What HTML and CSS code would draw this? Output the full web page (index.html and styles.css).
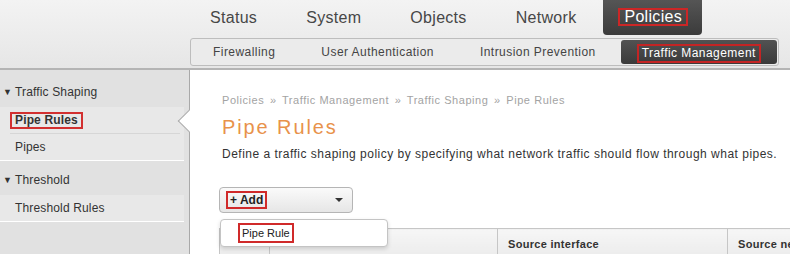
FILE: index.html
```html
<!DOCTYPE html>
<html lang="en">
  <head>
    <meta charset="UTF-8" />
    <title>Pipe Rules</title>
    <link rel="stylesheet" href="styles.css">
  </head>
  <body>

    <!-- Header with main and sub navigation -->
    <header class="header">
      <ul class="main-nav">
        <li>Status</li>
        <li>System</li>
        <li>Objects</li>
        <li>Network</li>
        <li class="active"><span class="mark">Policies</span></li>
      </ul>
      <ul class="sub-nav">
        <li>Firewalling</li>
        <li>User Authentication</li>
        <li>Intrusion Prevention</li>
        <li class="active"><span class="mark">Traffic Management</span></li>
      </ul>
    </header>

    <div class="page">
      <!-- Sidebar -->
      <nav class="sidebar">
        <div class="group"><i>&#9660;</i>Traffic Shaping</div>
        <ul>
          <li class="active"><span class="mark">Pipe Rules</span></li>
          <li>Pipes</li>
        </ul>
        <div class="group"><i>&#9660;</i>Threshold</div>
        <ul>
          <li>Threshold Rules</li>
        </ul>
      </nav>

      <!-- Main Content -->
      <main class="content">
        <div class="crumbs">Policies <i>&raquo;</i> Traffic Management <i>&raquo;</i> Traffic Shaping <i>&raquo;</i> Pipe Rules</div>
        <h1>Pipe Rules</h1>
        <p class="intro">Define a traffic shaping policy by specifying what network traffic should flow through what pipes.</p>

        <div class="add-wrap">
          <button class="add-btn"><span class="mark">+ Add</span><b class="caret"></b></button>
          <div class="add-menu"><span class="mark">Pipe Rule</span></div>
        </div>

        <table class="grid">
          <colgroup>
            <col style="width: 50px">
            <col style="width: 228px">
            <col style="width: 230px">
            <col>
          </colgroup>
          <thead>
            <tr>
              <th></th>
              <th></th>
              <th>Source interface</th>
              <th>Source network</th>
            </tr>
          </thead>
        </table>
      </main>
    </div>

  </body>
</html>
```

FILE: styles.css
```css
* {
  box-sizing: border-box;
}

body {
  margin: 0;
  width: 790px;
  height: 254px;
  overflow: hidden;
  font-family: "Liberation Sans", Arial, sans-serif;
  color: #333;
  background: #fff;
}

ul {
  list-style: none;
  margin: 0;
  padding: 0;
}

/* red annotation boxes */
.mark {
  display: inline-block;
  border: 2px solid #d02a2a;
  padding: 0 3px;
}

/* ---------- header ---------- */

.header {
  height: 70px;
  background: linear-gradient(#f3f3f3, #e6e6e6);
  border-bottom: 2px solid #b4b4b4;
  padding-left: 188px;
}

.main-nav {
  display: flex;
  gap: 5px;
  height: 35px;
}

.main-nav li {
  padding: 0 22px;
  font-size: 16px;
  line-height: 36px;
  letter-spacing: 0.3px;
  color: #474747;
}

.main-nav li.active {
  background: linear-gradient(#555, #3b3b3b);
  color: #fff;
  border-radius: 0 0 4px 4px;
  padding: 0 14px 0 15px;
  display: flex;
  align-items: center;
}

.main-nav li.active .mark {
  line-height: 14px;
  padding: 0 4px;
  margin-top: -1px;
  border-color: #cc2626;
}

.sub-nav {
  display: flex;
  gap: 4px;
  margin: 3px 11px 0 2px;
  height: 28px;
  padding: 1px;
  border: 1px solid #bdbdbd;
  border-radius: 3px;
  background: #ebebeb;
}

.sub-nav li {
  padding: 0 21px;
  font-size: 12px;
  line-height: 24px;
  letter-spacing: 0.45px;
  color: #444;
}

.sub-nav li.active {
  background: linear-gradient(#525252, #3a3a3a);
  color: #fff;
  border-radius: 3px;
  padding: 0 16px 0 16px;
  display: flex;
  align-items: flex-end;
}

.sub-nav li.active .mark {
  line-height: 15px;
  padding: 0 3px;
  margin-bottom: 1px;
  border-color: #c42424;
}

/* ---------- page body ---------- */

.page {
  display: flex;
  height: 184px;
}

.sidebar {
  width: 190px;
  flex: none;
  background: #e1e1e1;
  border-right: 1px solid #a9a9a9;
  padding-top: 7px;
  font-size: 12px;
  letter-spacing: 0.15px;
  color: #333;
}

.sidebar .group {
  height: 30px;
  line-height: 30px;
  padding-left: 3px;
}

.sidebar .group i {
  font-style: normal;
  font-size: 9px;
  display: inline-block;
  width: 12px;
  vertical-align: top;
}

.sidebar ul + .group {
  margin-top: 4px;
}

.sidebar li {
  position: relative;
  width: 184px;
  height: 27px;
  line-height: 26px;
  padding-left: 15px;
  background: #e8e8e8;
  border-bottom: 1px solid #fff;
}

.sidebar li.active {
  padding-left: 10px;
  font-weight: bold;
  border-bottom: 0;
}

.sidebar li.active::before {
  content: "";
  position: absolute;
  left: 10px;
  right: 4px;
  bottom: 0;
  border-bottom: 1px solid #d6d6d6;
}

.sidebar li.active::after {
  content: "";
  position: absolute;
  right: -13px;
  top: 50%;
  width: 15px;
  height: 15px;
  margin-top: -8px;
  background: #fff;
  border-left: 1px solid #a9a9a9;
  border-bottom: 1px solid #a9a9a9;
  transform: rotate(45deg);
}

.sidebar li.active .mark {
  line-height: 13px;
  padding: 0 3px;
  border-color: #d23030;
}

.content {
  flex: 1;
  min-width: 0;
  padding: 23px 0 0 29px;
  overflow: hidden;
}

.crumbs {
  font-size: 11px;
  line-height: 14px;
  color: #a3a3a3;
  padding-left: 3px;
  letter-spacing: 0.55px;
}

.crumbs i {
  font-style: normal;
  padding: 0 2px;
}

h1 {
  margin: 8px 0 0 3px;
  font-size: 20px;
  line-height: 24px;
  font-weight: normal;
  letter-spacing: 1.9px;
  color: #e8924b;
}

.intro {
  margin: 7px 0 0 3px;
  font-size: 12px;
  line-height: 16px;
  letter-spacing: 0.49px;
  color: #333;
  white-space: nowrap;
}

/* ---------- add button + menu ---------- */

.add-wrap {
  position: relative;
  margin-top: 25px;
  height: 26px;
}

.add-btn {
  display: flex;
  align-items: center;
  justify-content: space-between;
  width: 134px;
  height: 26px;
  padding: 0 9px 0 6px;
  font-family: inherit;
  font-size: 12px;
  font-weight: bold;
  color: #222;
  background: linear-gradient(#fafafa, #e6e6e6);
  border: 1px solid #b5b5b5;
  border-radius: 4px;
}

.add-btn .mark {
  line-height: 14px;
  padding: 0 2px;
}

.caret {
  border-top: 4px solid #333;
  border-left: 4px solid transparent;
  border-right: 4px solid transparent;
}

.add-menu {
  position: absolute;
  z-index: 2;
  top: 32px;
  left: 1px;
  width: 168px;
  height: 28px;
  padding: 3px 0 0 17px;
  font-size: 11px;
  background: #fff;
  border: 1px solid #c4c4c4;
  border-radius: 4px;
  box-shadow: 0 2px 4px rgba(0, 0, 0, 0.15);
}

.add-menu .mark {
  line-height: 16px;
  padding: 0 2px;
  color: #222;
}

/* ---------- table ---------- */

.grid {
  margin-top: 15px;
  width: 700px;
  table-layout: fixed;
  border-collapse: collapse;
}

.grid th {
  height: 30px;
  padding: 0 10px;
  text-align: left;
  font-size: 11px;
  font-weight: bold;
  letter-spacing: 0.3px;
  color: #333;
  white-space: nowrap;
  overflow: hidden;
  background: linear-gradient(#f6f6f6, #ebebeb);
  border: 1px solid #c6c6c6;
}
```
